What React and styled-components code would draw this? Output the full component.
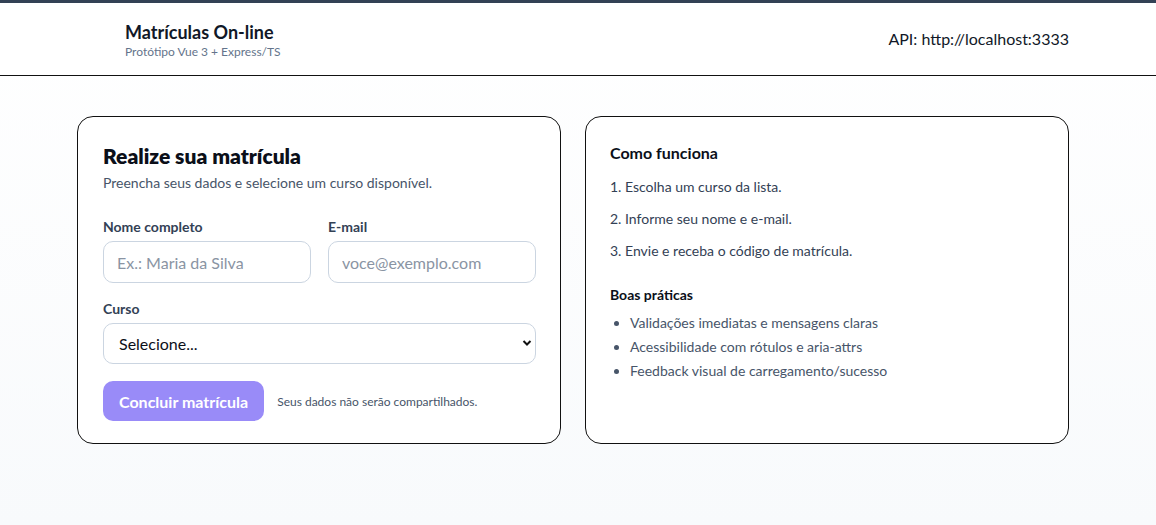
import styled, { createGlobalStyle } from "styled-components";

const Global = createGlobalStyle`
  html, body {
    margin: 0;
    padding: 0;
  }
  body {
    font-family: Lato, "Open Sans", sans-serif;
    color: #0f172a;
    background: linear-gradient(180deg, #ffffff 0%, #f8fafc 100%);
    min-height: 525px;
  }
  * { box-sizing: border-box; }
`;

const Page = styled.div`
  min-height: 525px;
  border-top: 3px solid #334155;
`;

const Header = styled.header`
  height: 73px;
  background: #ffffff;
  border-bottom: 1px solid #111111;
  display: flex;
  align-items: center;
  justify-content: space-between;
  padding: 0 87px 0 125px;
`;

const Brand = styled.div`
  display: flex;
  flex-direction: column;
  gap: 0;
  margin-top: 2px;
`;

const BrandTitle = styled.div`
  font-size: 18px;
  line-height: 24px;
  font-weight: 700;
  color: #111827;
`;

const BrandSub = styled.div`
  font-size: 12px;
  line-height: 16px;
  color: #64748b;
`;

const ApiInfo = styled.div`
  font-size: 16px;
  color: #111827;
  margin-top: -2px;
`;

const Main = styled.main`
  width: 992px;
  margin: 40px 0 0 77px;
  display: grid;
  grid-template-columns: minmax(0, 1fr) minmax(0, 1fr);
  gap: 24px;
`;

const Card = styled.section`
  min-width: 0;
  background: #ffffff;
  border: 1px solid #111111;
  border-radius: 16px;
  padding: ${({ $pad }) => $pad || "25px 24px"};
  height: 328px;
`;

const CardTitle = styled.h1`
  margin: 0;
  font-size: 21px;
  line-height: 26px;
  font-weight: 800;
  color: #0b0f19;
`;

const Lead = styled.p`
  margin: 5px 0 0;
  font-size: 14px;
  line-height: 18px;
  color: #475569;
`;

const Form = styled.form`
  margin-top: 26px;
  display: flex;
  flex-direction: column;
  gap: 17px;
`;

const FieldRow = styled.div`
  display: grid;
  grid-template-columns: minmax(0, 1fr) minmax(0, 1fr);
  gap: 17px;
`;

const Field = styled.label`
  display: flex;
  flex-direction: column;
  gap: 5px;
  min-width: 0;
`;

const LabelText = styled.span`
  font-size: 14px;
  line-height: 18px;
  font-weight: 700;
  color: #334155;
`;

const Input = styled.input`
  width: 100%;
  height: 42px;
  border: 1px solid #cbd5e1;
  border-radius: 10px;
  padding: 0 13px;
  font-family: inherit;
  font-size: 16px;
  color: #0f172a;
  background: #fff;
  outline: none;

  &::placeholder {
    color: #8a94a3;
  }
`;

const SelectWrap = styled.div`
  position: relative;
`;

const Select = styled.select`
  width: 100%;
  height: 41px;
  border: 1px solid #cbd5e1;
  border-radius: 10px;
  padding: 0 15px;
  font-family: inherit;
  font-size: 16px;
  color: #0b0f19;
  background: #fff;
  appearance: none;
  outline: none;
`;

const Chevron = styled.svg`
  position: absolute;
  right: 4px;
  top: 16px;
  pointer-events: none;
`;

const Actions = styled.div`
  display: flex;
  align-items: center;
  gap: 13px;
`;

const Button = styled.button`
  height: 40px;
  padding: 0 16px;
  border: none;
  border-radius: 10px;
  background: #998bf8;
  color: #ffffff;
  font-family: inherit;
  font-size: 16px;
  font-weight: 700;
`;

const Note = styled.span`
  font-size: 12px;
  color: #475569;
`;

const SideTitle = styled.h2`
  margin: 0;
  font-size: 16px;
  line-height: 22px;
  font-weight: 700;
  color: #0b0f19;
`;

const Steps = styled.ol`
  margin: 14px 0 0;
  padding: 0;
  list-style: none;
  display: flex;
  flex-direction: column;
  gap: 14px;
`;

const Step = styled.li`
  font-size: 14px;
  line-height: 18px;
  color: #334155;
`;

const SubTitle = styled.h3`
  margin: 26px 0 0;
  font-size: 14px;
  line-height: 18px;
  font-weight: 700;
  color: #0b0f19;
`;

const Bullets = styled.ul`
  margin: 10px 0 0;
  padding-left: 20px;
  display: flex;
  flex-direction: column;
  gap: 6px;
`;

const Bullet = styled.li`
  font-size: 14px;
  line-height: 18px;
  color: #475569;

  &::marker {
    color: #475569;
  }
`;

const steps = [
  "1. Escolha um curso da lista.",
  "2. Informe seu nome e e-mail.",
  "3. Envie e receba o código de matrícula.",
];

const tips = [
  "Validações imediatas e mensagens claras",
  "Acessibilidade com rótulos e aria-attrs",
  "Feedback visual de carregamento/sucesso",
];

export default function App() {
  return (
    <>
      <Global />
      <Page>
        <Header>
          <Brand>
            <BrandTitle>Matrículas On-line</BrandTitle>
            <BrandSub>Protótipo Vue 3 + Express/TS</BrandSub>
          </Brand>
          <ApiInfo>API: http://localhost:3333</ApiInfo>
        </Header>

        <Main>
          <Card $pad="26px 24px 25px 25px">
            <CardTitle>Realize sua matrícula</CardTitle>
            <Lead>Preencha seus dados e selecione um curso disponível.</Lead>

            <Form onSubmit={(e) => e.preventDefault()}>
              <FieldRow>
                <Field>
                  <LabelText>Nome completo</LabelText>
                  <Input placeholder="Ex.: Maria da Silva" />
                </Field>
                <Field>
                  <LabelText>E-mail</LabelText>
                  <Input type="email" placeholder="voce@exemplo.com" />
                </Field>
              </FieldRow>

              <Field>
                <LabelText>Curso</LabelText>
                <SelectWrap>
                  <Select defaultValue="">
                    <option value="">Selecione...</option>
                  </Select>
                  <Chevron width="10" height="8" viewBox="0 0 10 8">
                    <path
                      d="M1.5 2 L5 5.5 L8.5 2"
                      fill="none"
                      stroke="#111"
                      strokeWidth="2"
                    />
                  </Chevron>
                </SelectWrap>
              </Field>

              <Actions>
                <Button type="submit" disabled>
                  Concluir matrícula
                </Button>
                <Note>Seus dados não serão compartilhados.</Note>
              </Actions>
            </Form>
          </Card>

          <Card>
            <SideTitle>Como funciona</SideTitle>
            <Steps>
              {steps.map((s) => (
                <Step key={s}>{s}</Step>
              ))}
            </Steps>

            <SubTitle>Boas práticas</SubTitle>
            <Bullets>
              {tips.map((t) => (
                <Bullet key={t}>{t}</Bullet>
              ))}
            </Bullets>
          </Card>
        </Main>
      </Page>
    </>
  );
}
